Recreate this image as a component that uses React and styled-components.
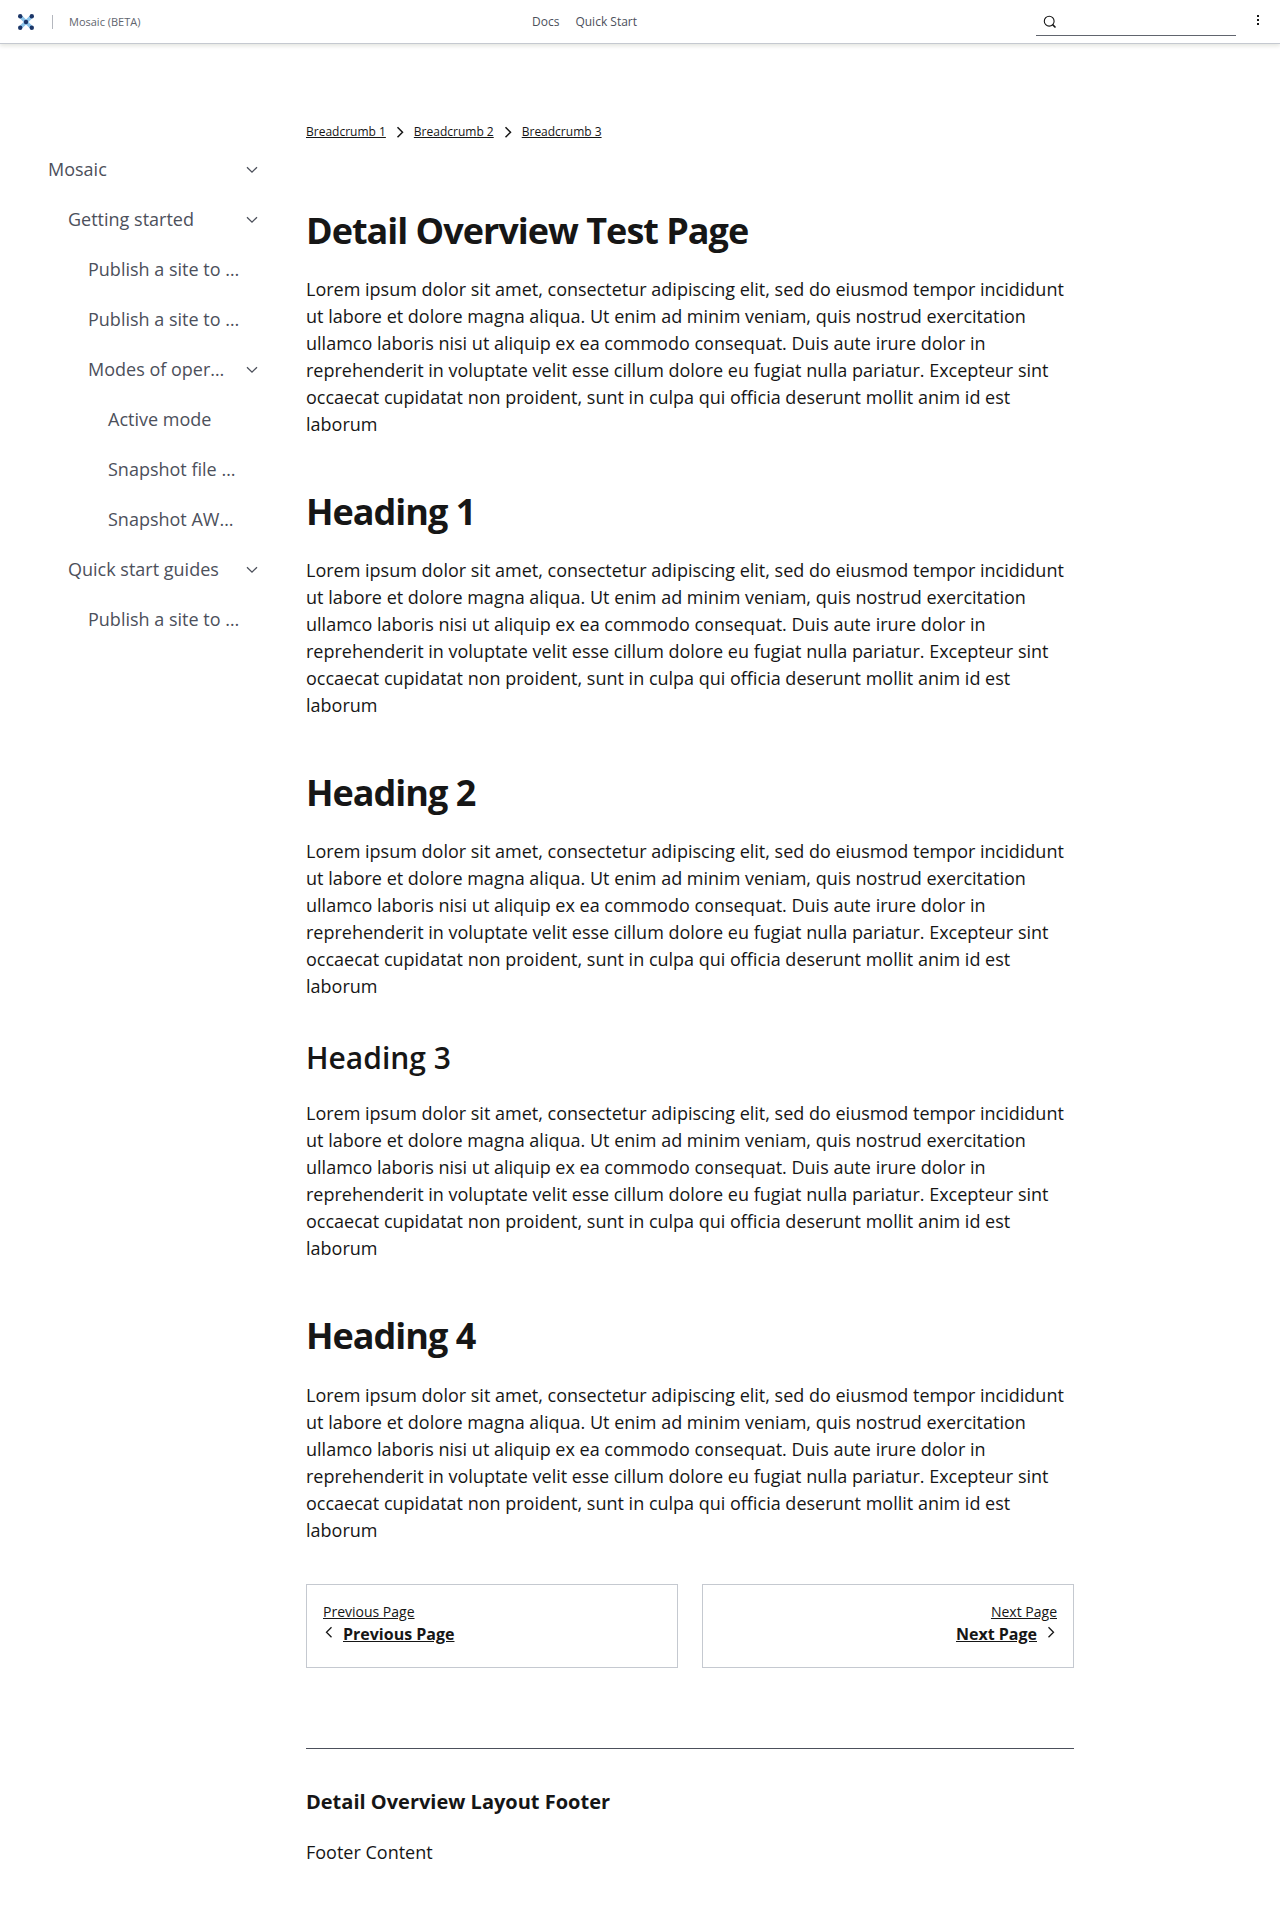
import React from "react";
import styled, { createGlobalStyle } from "styled-components";

const GlobalStyle = createGlobalStyle`
  *, *::before, *::after { box-sizing: border-box; }
  body {
    margin: 0;
    background: #fff;
    color: #161616;
    font-family: "Open Sans", "Noto Sans", sans-serif;
    font-size: 18px;
    line-height: 27px;
  }
  h1, h2, h3, p, ul { margin: 0; padding: 0; }
  a { color: inherit; }
`;

const Page = styled.div`
  min-height: 1906px;
`;

const Header = styled.header`
  display: grid;
  grid-template-columns: 514px auto 1fr;
  align-items: start;
  height: 44px;
  padding: 0 14px 0 18px;
  border-bottom: 1px solid #c5c9d0;
  box-shadow: 0 2px 4px rgba(76, 81, 48, 0.15);
  color: #4c505b;
  font-size: 12px;
  line-height: 43px;
`;

const Brand = styled.div`
  display: flex;
  align-items: center;
  height: 43px;
`;

const Divider = styled.span`
  width: 1px;
  height: 14px;
  margin: 0 16px 0 18px;
  background: #b4b7be;
`;

const BrandName = styled.span`
  font-size: 11px;
  color: #61656e;
`;

const Menu = styled.nav`
  display: flex;
  gap: 16px;
  span { white-space: nowrap; }
`;

const Tools = styled.div`
  display: flex;
  justify-content: flex-end;
  gap: 14px;
`;

const Search = styled.div`
  display: flex;
  align-items: center;
  width: 200px;
  height: 28px;
  margin-top: 8px;
  padding: 0 0 0 7px;
  border-bottom: 1px solid #61656e;
`;

const More = styled.div`
  display: flex;
  justify-content: center;
  width: 16px;
  padding-top: 15px;
`;

const Body = styled.div`
  display: grid;
  grid-template-columns: 258px 768px;
  column-gap: 48px;
`;

const Sidebar = styled.ul`
  padding: 100px 0 0 48px;
  list-style: none;
  color: #4c505b;
`;

const SideItem = styled.li`
  display: flex;
  align-items: center;
  justify-content: space-between;
  height: 50px;
  padding-left: ${(p) => p.$level * 20}px;
  white-space: nowrap;
`;

const Content = styled.main`
  padding-top: 74px;
`;

const Breadcrumbs = styled.nav`
  display: flex;
  align-items: center;
  gap: 8px;
  height: 28px;
  margin-bottom: 59px;
  font-size: 12px;
  line-height: 16px;
`;

const Heading = styled.h1`
  margin-bottom: ${(p) => p.$after ?? 19}px;
  font-size: 36px;
  font-weight: 700;
  line-height: 52px;
  letter-spacing: -1px;
`;

const SubHeading = styled.h3`
  margin-bottom: 24px;
  font-size: 30px;
  font-weight: 600;
  line-height: 36px;
`;

const Paragraph = styled.p`
  margin-bottom: ${(p) => p.$gap ?? 48}px;
`;

const Pager = styled.div`
  display: grid;
  grid-template-columns: 1fr 1fr;
  gap: 24px;
`;

const PagerCard = styled.div`
  display: flex;
  flex-direction: column;
  align-items: ${(p) => (p.$end ? "flex-end" : "flex-start")};
  height: 84px;
  padding: 16px;
  border: 1px solid #c5c9d0;
`;

const PagerLabel = styled.a`
  font-size: 14px;
  line-height: 22px;
  text-decoration: underline;
`;

const PagerTitle = styled.div`
  display: flex;
  align-items: flex-start;
  gap: 8px;
  font-size: 16px;
  line-height: 22px;
  font-weight: 700;
  a { text-decoration: underline; }
  svg { margin-top: 3px; }
`;

const Footer = styled.footer`
  margin-top: 80px;
  padding-top: 39px;
  border-top: 1px solid #4c505b;
`;

const FooterTitle = styled.h2`
  margin-bottom: 23px;
  font-size: 20px;
  font-weight: 700;
  line-height: 28px;
`;

const LOREM =
  "Lorem ipsum dolor sit amet, consectetur adipiscing elit, sed do eiusmod tempor incididunt ut labore et dolore magna aliqua. Ut enim ad minim veniam, quis nostrud exercitation ullamco laboris nisi ut aliquip ex ea commodo consequat. Duis aute irure dolor in reprehenderit in voluptate velit esse cillum dolore eu fugiat nulla pariatur. Excepteur sint occaecat cupidatat non proident, sunt in culpa qui officia deserunt mollit anim id est laborum";

const SIDE_ITEMS = [
  { label: "Mosaic", level: 0, open: true },
  { label: "Getting started", level: 1, open: true },
  { label: "Publish a site to …", level: 2 },
  { label: "Publish a site to …", level: 2 },
  { label: "Modes of oper…", level: 2, open: true },
  { label: "Active mode", level: 3 },
  { label: "Snapshot file …", level: 3 },
  { label: "Snapshot AW…", level: 3 },
  { label: "Quick start guides", level: 1, open: true },
  { label: "Publish a site to …", level: 2 },
];

function Logo() {
  return (
    <svg width="16" height="16" viewBox="0 0 16 16">
      <path d="M2 2l12 12M14 2L2 14" stroke="#8cc4ea" strokeWidth="3.6" />
      <g fill="#1b3668">
        <circle cx="2.2" cy="2.2" r="2.2" />
        <circle cx="13.8" cy="2.2" r="2.2" />
        <circle cx="8" cy="8" r="2.2" />
        <circle cx="2.2" cy="13.8" r="2.2" />
        <circle cx="13.8" cy="13.8" r="2.2" />
      </g>
    </svg>
  );
}

function Chevron({ dir, stroke = 1.3 }) {
  const paths = {
    down: "M1 4.2l5 5 5-5",
    right: "M3.5 1.2l5 5-5 5",
    left: "M8.5 1.2l-5 5 5 5",
  };
  return (
    <svg width="12" height="12" viewBox="0 0 12 12" fill="none" stroke="currentColor" strokeWidth={stroke}>
      <path d={paths[dir]} />
    </svg>
  );
}

export default function App() {
  return (
    <Page>
      <GlobalStyle />
      <Header>
        <Brand>
          <Logo />
          <Divider />
          <BrandName>Mosaic (BETA)</BrandName>
        </Brand>
        <Menu>
          <span>Docs</span>
          <span>Quick Start</span>
        </Menu>
        <Tools>
          <Search>
            <svg width="14" height="14" viewBox="0 0 14 14" fill="none" stroke="#161616">
              <circle cx="6.2" cy="6.2" r="4.9" strokeWidth="1.1" />
              <path d="M9.6 9.6l2.9 2.9" strokeWidth="1.6" />
            </svg>
          </Search>
          <More>
            <svg width="2" height="10" viewBox="0 0 2 10" fill="#161616">
              <path d="M0 0h2v2H0zM0 4h2v2H0zM0 8h2v2H0z" />
            </svg>
          </More>
        </Tools>
      </Header>
      <Body>
        <Sidebar>
          {SIDE_ITEMS.map((item, i) => (
            <SideItem key={i} $level={item.level}>
              <span>{item.label}</span>
              {item.open && <Chevron dir="down" />}
            </SideItem>
          ))}
        </Sidebar>
        <Content>
          <Breadcrumbs>
            <a href="#1">Breadcrumb 1</a>
            <Chevron dir="right" stroke={1.5} />
            <a href="#2">Breadcrumb 2</a>
            <Chevron dir="right" stroke={1.5} />
            <a href="#3">Breadcrumb 3</a>
          </Breadcrumbs>
          <Heading>Detail Overview Test Page</Heading>
          <Paragraph>{LOREM}</Paragraph>
          <Heading as="h2">Heading 1</Heading>
          <Paragraph>{LOREM}</Paragraph>
          <Heading as="h2">Heading 2</Heading>
          <Paragraph $gap={40}>{LOREM}</Paragraph>
          <SubHeading>Heading 3</SubHeading>
          <Paragraph>{LOREM}</Paragraph>
          <Heading as="h2" $after={20}>Heading 4</Heading>
          <Paragraph $gap={40}>{LOREM}</Paragraph>
          <Pager>
            <PagerCard>
              <PagerLabel href="#prev">Previous Page</PagerLabel>
              <PagerTitle>
                <Chevron dir="left" />
                <a href="#prev">Previous Page</a>
              </PagerTitle>
            </PagerCard>
            <PagerCard $end>
              <PagerLabel href="#next">Next Page</PagerLabel>
              <PagerTitle>
                <a href="#next">Next Page</a>
                <Chevron dir="right" />
              </PagerTitle>
            </PagerCard>
          </Pager>
          <Footer>
            <FooterTitle>Detail Overview Layout Footer</FooterTitle>
            <p>Footer Content</p>
          </Footer>
        </Content>
      </Body>
    </Page>
  );
}
